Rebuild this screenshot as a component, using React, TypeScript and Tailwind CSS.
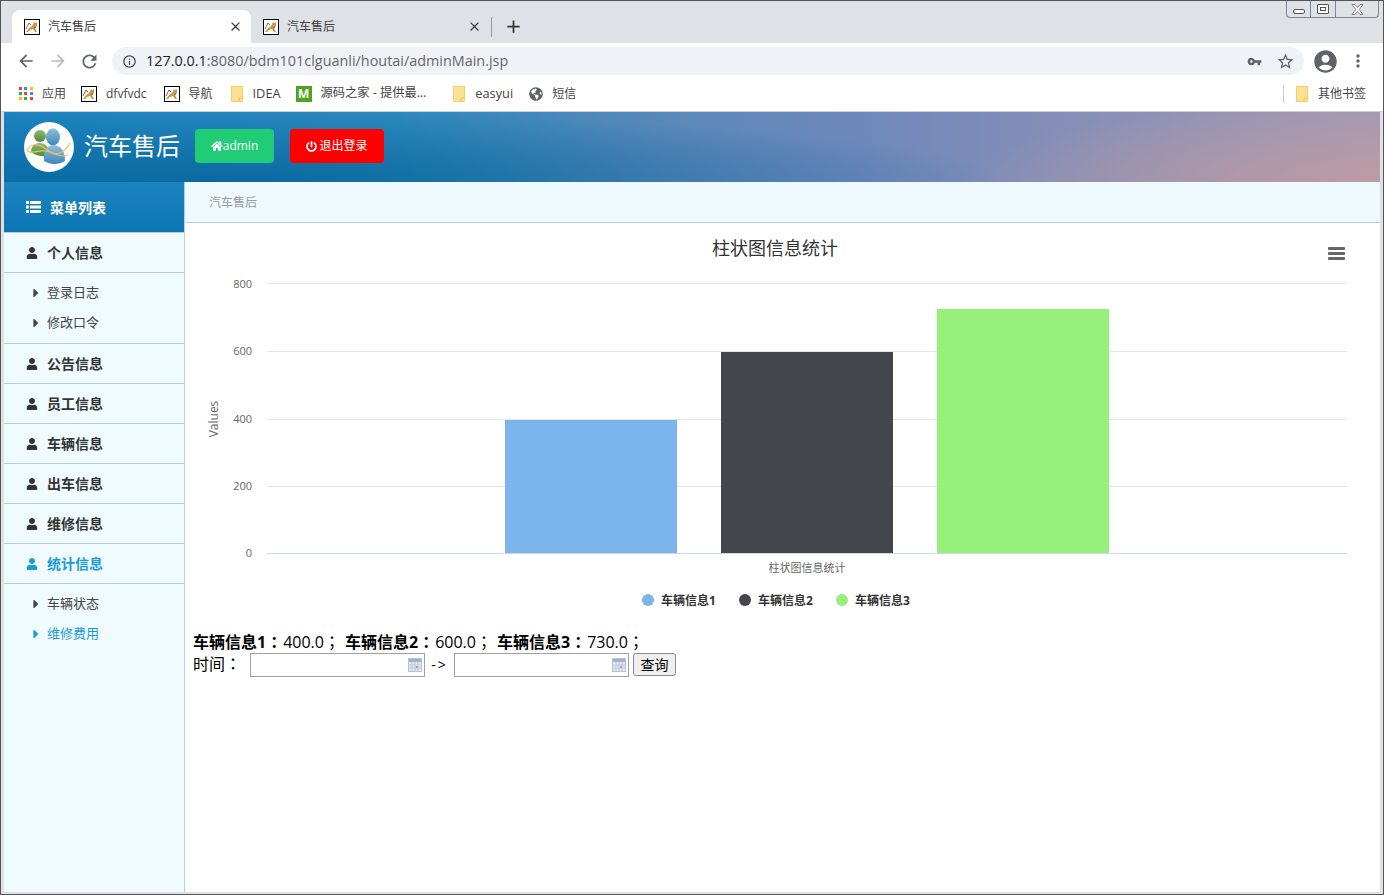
import { FaCaretRight, FaGlobeAmericas, FaHome, FaPowerOff, FaUser } from "react-icons/fa"
import { MdAccountCircle, MdArrowBack, MdArrowForward, MdClose, MdInfoOutline, MdMoreVert, MdRefresh, MdVpnKey, MdAdd, MdStarBorder } from "react-icons/md"

const cjk = "font-['Open_Sans','Noto_Sans_CJK_SC',sans-serif]"
// centred full-width punctuation, as in the reference
const punct = "font-['Noto_Sans_CJK_TC',sans-serif]"

function TomcatIcon() {
  return (
    <svg width="16" height="16" viewBox="0 0 16 16" className="shrink-0">
      <rect x="0.5" y="0.5" width="15" height="15" fill="#fff" stroke="#000" />
      <path d="M2 13 L5 9 L8 7 L10 3 L11 4 L13 3 L13 7 L11 9 L13 13 L11 13 L9 10 L6 11 L4 13 Z" fill="#c99a4b" />
      <path d="M2 10 L5 4 L7 6 M10 9 L12 8" fill="none" stroke="#6b6b6b" strokeWidth="1" />
    </svg>
  )
}

function FolderIcon() {
  return (
    <svg width="12" height="16" viewBox="0 0 12 16" className="mr-px shrink-0">
      <path d="M0.5 0.5 H11.5 V15.5 H0.5 Z" fill="#fde293" stroke="#f5cf63" />
      <path d="M8 15 V12 H11" fill="none" stroke="#f0c040" />
    </svg>
  )
}

function Tab({ active }: { active?: boolean }) {
  return (
    <div className={`flex h-[33px] w-[239px] items-center rounded-t-lg pl-3 pr-[8px] ${active ? "bg-white" : ""}`}>
      <TomcatIcon />
      <span className="ml-2 flex-1 text-xs text-[#3c4043]">汽车售后</span>
      <MdClose size={15} className="text-[#3c4043]" />
    </div>
  )
}

function Bookmark({ icon, label, className }: { icon: React.ReactNode; label: string; className?: string }) {
  return (
    <div className={`flex items-center gap-[9px] text-[#444] ${className ?? "text-xs"}`}>
      {icon}
      <span>{label}</span>
    </div>
  )
}

function AppsIcon() {
  const colors = ["#ea4335", "#4285f4", "#fbbc05", "#34a853", "#ea4335", "#4285f4", "#fbbc05", "#34a853", "#ea4335"]
  return (
    <div className="grid w-[14px] grid-cols-3 gap-[2px]">
      {colors.map((c, i) => (
        <div key={i} className="size-[3px]" style={{ backgroundColor: c }} />
      ))}
    </div>
  )
}

function ListIcon() {
  return (
    <svg width="15" height="12" viewBox="0 0 15 12" fill="#fff" className="mr-[9px] shrink-0">
      <rect x="0" y="0" width="3" height="3" />
      <rect x="4" y="0" width="11" height="3" />
      <rect x="0" y="4.5" width="3" height="3" />
      <rect x="4" y="4.5" width="11" height="3" />
      <rect x="0" y="9" width="3" height="3" />
      <rect x="4" y="9" width="11" height="3" />
    </svg>
  )
}

function MenuHead({ label, active }: { label: string; active?: boolean }) {
  return (
    <div className={`flex h-10 shrink-0 items-center border-b border-[#b5d2da] pl-[22px] text-sm font-bold ${active ? "text-[#1a9bd7]" : "text-[#333]"}`}>
      <FaUser size={12} className="mr-[9px]" />
      <span className="pt-px">{label}</span>
    </div>
  )
}

function MenuSub({ label, active }: { label: string; active?: boolean }) {
  return (
    <div className={`flex h-[30px] items-center pl-[25px] text-[13px] ${active ? "text-[#1a9bd7]" : "text-[#444]"}`}>
      <FaCaretRight size={14} className="mr-[4px]" />
      <span>{label}</span>
    </div>
  )
}

function Logo() {
  return (
    <svg width="50" height="50" viewBox="0 0 50 50" className="shrink-0">
      <defs>
        <linearGradient id="bl" x1="0" y1="0" x2="0" y2="1">
          <stop offset="0" stopColor="#8fc0e0" />
          <stop offset="1" stopColor="#3f86b8" />
        </linearGradient>
        <linearGradient id="gr" x1="0" y1="0" x2="0" y2="1">
          <stop offset="0" stopColor="#8fbb72" />
          <stop offset="1" stopColor="#4f8a3c" />
        </linearGradient>
      </defs>
      <circle cx="25" cy="25" r="25" fill="#fff" />
      <circle cx="16" cy="14" r="6" fill="url(#gr)" />
      <path d="M7 30 C7 23 12 21 16 21 C21 21 25 24 25 34 C18 35 12 34 7 30 Z" fill="url(#gr)" />
      <ellipse cx="29" cy="15" rx="7" ry="8.5" fill="url(#bl)" />
      <path d="M20 39 C19 28 24 23 29 23 C36 23 41 28 41 39 C35 43 26 43 20 39 Z" fill="url(#bl)" />
      <path d="M3 29 C6 21 14 21 22 27 C30 33 38 35 46 21 M3 29 C8 33 16 26 26 30 C32 33 38 35 44 33" fill="none" stroke="#e8c060" strokeWidth="1.2" />
    </svg>
  )
}

function Chart() {
  const grid = [
    { y: 60.5, textY: 65, label: "800" },
    { y: 128.5, textY: 132, label: "600" },
    { y: 196.5, textY: 200, label: "400" },
    { y: 263.5, textY: 267, label: "200" },
  ]
  const font = "'Open Sans','Noto Sans CJK SC',sans-serif"
  return (
    <svg width="1195" height="396" viewBox="0 0 1195 396" fontFamily={font} className="block">
      <text x="590" y="32" textAnchor="middle" fontSize="18" fill="#333">柱状图信息统计</text>
      <g fill="#666">
        <rect x="1143" y="24" width="17" height="3" rx="1" />
        <rect x="1143" y="29" width="17" height="3" rx="1" />
        <rect x="1143" y="34" width="17" height="3" rx="1" />
      </g>
      {grid.map((g) => (
        <g key={g.label}>
          <line x1="82" x2="1162" y1={g.y} y2={g.y} stroke="#e6e6e6" />
          <text x="67" y={g.textY} textAnchor="end" fontSize="11" fill="#666">{g.label}</text>
        </g>
      ))}
      <line x1="82" x2="1162" y1="330.5" y2="330.5" stroke="#ccd6eb" />
      <text x="67" y="334" textAnchor="end" fontSize="11" fill="#666">0</text>
      <text transform="translate(33 196) rotate(-90)" textAnchor="middle" fontSize="12" fill="#666">Values</text>
      <rect x="320" y="197" width="172" height="133" fill="#7cb5ec" />
      <rect x="536" y="129" width="172" height="201" fill="#43474b" />
      <rect x="752" y="86" width="172" height="244" fill="#96f07a" />
      <text x="622" y="349" textAnchor="middle" fontSize="11" fill="#666">柱状图信息统计</text>
      <g fontSize="12" fontWeight="700" fill="#333">
        <circle cx="463" cy="377" r="6" fill="#7cb5ec" />
        <text x="476" y="382">车辆信息1</text>
        <circle cx="560" cy="377" r="6" fill="#43474b" />
        <text x="573" y="382">车辆信息2</text>
        <circle cx="657" cy="377" r="6" fill="#96f07a" />
        <text x="670" y="382">车辆信息3</text>
      </g>
    </svg>
  )
}

function DateInput() {
  return (
    <div className="flex h-6 w-[175px] items-center justify-end border border-[#a0a0a0] bg-white pr-[2px]">
      <svg width="14" height="14" viewBox="0 0 14 14">
        <rect x="0.5" y="0.5" width="13" height="13" fill="#dfe7f2" stroke="#b9c4d6" />
        <rect x="1" y="1" width="12" height="3" fill="#9fb3d1" />
        <path d="M1 7 H13 M1 10 H13 M4 4 V13 M7 4 V13 M10 4 V13" stroke="#c0cbdc" />
        <rect x="8" y="8" width="2" height="2" fill="#e88" />
      </svg>
    </div>
  )
}

export default function App(): React.ReactElement {
  const topMenus = ["公告信息", "员工信息", "车辆信息", "出车信息", "维修信息"]
  const stats = [
    { name: "车辆信息1", value: "400.0" },
    { name: "车辆信息2", value: "600.0" },
    { name: "车辆信息3", value: "730.0" },
  ]

  return (
    <div className={`flex h-[895px] w-[1384px] flex-col overflow-hidden border-x border-y border-[#555] bg-[#dee1e6] ${cjk}`}>
      {/* tab strip */}
      <div className="relative flex h-[42px] shrink-0 items-end pl-[11px]">
        <Tab active />
        <Tab />
        <div className="mb-[6px] ml-[1px] h-5 w-px bg-[#9a9a9a]" />
        <MdAdd size={21} className="mb-[6px] ml-[11px] text-[#333]" />
        <div className="absolute right-[4px] top-0 flex h-[17px] w-[93px] rounded-b-[4px] border border-t-0 border-[#7b8794] bg-[#dee1e6]">
          <div className="flex w-[24px] items-center justify-center border-r border-[#7b8794]">
            <div className="mt-[4px] h-[5px] w-[12px] rounded-[2px] border border-[#555] bg-white" />
          </div>
          <div className="flex w-[25px] items-center justify-center border-r border-[#7b8794]">
            <div className="flex h-[10px] w-[12px] items-center justify-center rounded-[1px] border border-[#555] bg-white">
              <div className="h-[4px] w-[6px] border border-[#555]" />
            </div>
          </div>
          <div className="flex flex-1 items-center justify-center">
            <svg width="13" height="11" viewBox="0 0 13 11">
              <path d="M1 .5 H4 L6.5 3.5 L9 .5 H12 L8.2 5.5 L12 10.5 H9 L6.5 7.5 L4 10.5 H1 L4.8 5.5 Z" fill="#fff" stroke="#666" strokeWidth="0.8" />
            </svg>
          </div>
        </div>
      </div>

      {/* toolbar */}
      <div className="flex h-[36px] shrink-0 items-center bg-white pl-[15px] pr-[14px]">
        <MdArrowBack size={20} className="text-[#5f6368]" />
        <MdArrowForward size={20} className="ml-[12px] text-[#b8babd]" />
        <MdRefresh size={21} className="ml-[11px] text-[#5f6368]" />
        <div className="ml-[12px] flex h-7 w-[1192px] items-center rounded-full bg-[#eff3f8] pl-[10px] pr-[9px]">
          <MdInfoOutline size={15} className="text-[#444]" />
          <span className="ml-[9px] flex-1 text-[14.4px] text-[#666]">
            <span className="text-[#222]">127.0.0.1</span>:8080/bdm101clguanli/houtai/adminMain.jsp
          </span>
          <MdVpnKey size={15} className="text-[#5f6368]" />
          <MdStarBorder size={19} className="ml-[14px] text-[#5f6368]" />
        </div>
        <MdAccountCircle size={27} className="ml-[8px] text-[#5f6368]" />
        <MdMoreVert size={20} className="ml-[9px] text-[#5f6368]" />
      </div>

      {/* bookmarks */}
      <div className="flex h-[33px] shrink-0 items-center border-b border-[#d0d0d0] bg-white pb-[3px] pl-[18px] pr-[17px]">
        <Bookmark icon={<AppsIcon />} label="应用" />
        <Bookmark icon={<TomcatIcon />} label="dfvfvdc" className="ml-[15px] text-xs" />
        <Bookmark icon={<TomcatIcon />} label="导航" className="ml-[17px] text-xs" />
        <Bookmark icon={<FolderIcon />} label="IDEA" className="ml-[18px] text-[12.8px]" />
        <Bookmark
          icon={<div className="flex size-4 items-center justify-center bg-[#4fa31f] text-xs font-bold text-white">M</div>}
          label="源码之家 - 提供最..."
          className="ml-[15px] text-[12.25px]"
        />
        <Bookmark icon={<FolderIcon />} label="easyui" className="ml-[27px] text-[12.8px]" />
        <Bookmark icon={<FaGlobeAmericas size={14} className="text-[#5f6368]" />} label="短信" className="ml-[16px] text-xs" />
        <div className="ml-auto h-[18px] w-px bg-[#ccc]" />
        <Bookmark icon={<FolderIcon />} label="其他书签" className="ml-3 text-xs" />
      </div>

      {/* page */}
      <div className="mb-[2px] ml-[3px] mr-[3px] flex min-h-0 flex-1 flex-col bg-white">
        <div className="flex h-[70px] shrink-0 items-center bg-[radial-gradient(ellipse_420px_80px_at_100%_100%,rgba(200,155,155,0.75),transparent),radial-gradient(ellipse_800px_70px_at_15%_100%,rgba(0,95,150,0.75),transparent),linear-gradient(to_right,#1c83bf_0%,#2a88bc_28%,#5a88ba_48%,#7088bb_63%,#8a90b7_80%,#a39ab5_100%)] pl-5">
          <Logo />
          <span className="mb-[2px] ml-[10px] text-2xl text-white">汽车售后</span>
          <div className="mb-[2px] ml-[15px] flex h-[34px] w-[79px] items-center justify-center rounded-[4px] bg-[#20cc76] text-xs text-white">
            <FaHome size={12} />
            <span>admin</span>
          </div>
          <div className="mb-[2px] ml-4 flex h-[34px] w-[94px] items-center justify-center gap-[2px] rounded-[4px] bg-[#ff0000] text-xs text-white">
            <FaPowerOff size={11} />
            <span>退出登录</span>
          </div>
        </div>

        <div className="flex min-h-0 flex-1">
          <div className="flex w-[181px] shrink-0 flex-col border-r border-[#b5d2da] bg-[#f0fbff]">
            <div className="flex h-[51px] shrink-0 items-center border-b border-[#b5d2da] bg-[linear-gradient(to_bottom,#1d84c0,#0a76b2)] pl-[22px] text-sm font-bold text-white">
              <ListIcon />
              <span className="pt-px">菜单列表</span>
            </div>
            <MenuHead label="个人信息" />
            <div className="flex h-[71px] shrink-0 flex-col justify-center border-b border-[#b5d2da]">
              <MenuSub label="登录日志" />
              <MenuSub label="修改口令" />
            </div>
            {topMenus.map((m) => (
              <MenuHead key={m} label={m} />
            ))}
            <MenuHead label="统计信息" active />
            <div className="flex flex-col pt-[5px]">
              <MenuSub label="车辆状态" />
              <MenuSub label="维修费用" active />
            </div>
          </div>

          <div className="min-w-0 flex-1">
            <div className="flex h-[41px] items-center border-b border-[#b5d2da] bg-[#eefaff] pl-6 pt-px text-xs text-[#999]">
              汽车售后
            </div>
            <Chart />
            <div className="mt-3 pl-2 text-base leading-[21px] text-black">
              <div className="flex">
                {stats.map((s) => (
                  <div key={s.name} className="w-[152px]">
                    <b>
                      {s.name}
                      <span className={punct}>：</span>
                    </b>
                    <span className="ml-px">{s.value}</span>
                    <span className={punct}>；</span>
                  </div>
                ))}
              </div>
              <div className="flex h-[24px] items-center">
                <span className="mb-[2px] w-[57px]">
                  时间<span className={punct}>：</span>
                </span>
                <DateInput />
                <span className="w-[29px] text-center text-sm tracking-[2px]">-&gt;</span>
                <DateInput />
                <button className="ml-1 h-[23px] w-[43px] self-start rounded-[3px] border border-[#8a8a8a] bg-[#efefef] text-sm leading-none">
                  查询
                </button>
              </div>
            </div>
          </div>
        </div>
      </div>
    </div>
  )
}
